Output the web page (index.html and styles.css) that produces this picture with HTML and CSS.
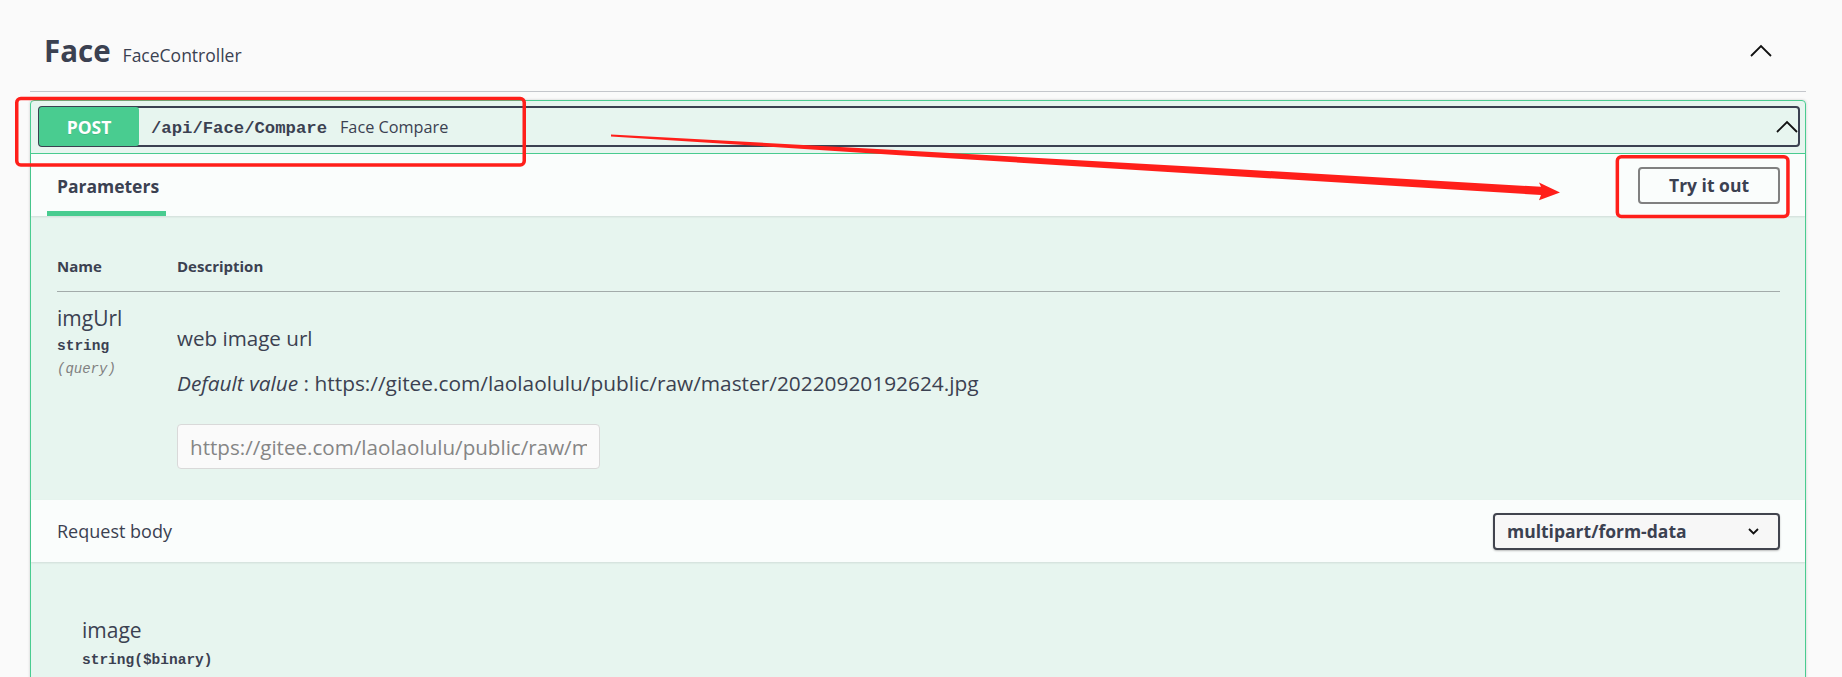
FILE: index.html
```html
<!DOCTYPE html>
<html lang="en">
<head>
<meta charset="utf-8">
<title>Face - Swagger</title>
<link rel="stylesheet" href="styles.css">
</head>
<body>
<div class="page">
  <div class="tag">
    <h3 class="tag-title"><span class="tag-name">Face</span><small class="tag-desc">FaceController</small></h3>
    <svg class="tag-arrow" viewBox="0 0 22 13" width="22" height="13"><polyline points="1,12 11,2 21,12" fill="none" stroke="#111" stroke-width="1.8"/></svg>
  </div>

  <div class="opblock">
    <div class="summary">
      <div class="summary-control">
        <span class="method">POST</span>
        <span class="path">/api/Face/Compare</span>
        <span class="summary-desc">Face Compare</span>
        <svg class="summary-arrow" viewBox="0 0 22 13" width="22" height="13"><polyline points="1,12 11,2 21,12" fill="none" stroke="#111" stroke-width="1.8"/></svg>
      </div>
    </div>

    <div class="section-header">
      <div class="tab"><span>Parameters</span></div>
      <button class="try-out">Try it out</button>
    </div>

    <div class="params">
      <table class="param-table">
        <thead>
          <tr><th class="col-name">Name</th><th>Description</th></tr>
        </thead>
        <tbody>
          <tr>
            <td class="col-name">
              <div class="pname">imgUrl</div>
              <div class="ptype">string</div>
              <div class="pin">(query)</div>
            </td>
            <td>
              <p class="pdesc">web image url</p>
              <p class="pdefault"><i>Default value</i> : https://gitee.com/laolaolulu/public/raw/master/20220920192624.jpg</p>
              <input class="pinput" type="text" placeholder="https://gitee.com/laolaolulu/public/raw/master/20220920192624.jpg">
            </td>
          </tr>
        </tbody>
      </table>
    </div>

    <div class="section-header rb-header">
      <span class="rb-title">Request body</span>
      <div class="select"><span>multipart/form-data</span><svg viewBox="0 0 11 7" width="11" height="7"><polyline points="1,1 5.5,5.5 10,1" fill="none" stroke="#111" stroke-width="1.8"/></svg></div>
    </div>

    <div class="rb-body">
      <div class="prop-name">image</div>
      <div class="prop-type">string($binary)</div>
    </div>
  </div>

  <svg class="annotations" width="1842" height="677" viewBox="0 0 1842 677">
    <rect x="16.75" y="98.45" width="507.5" height="66.5" rx="4" fill="none" stroke="#ff1f1a" stroke-width="3.5"/>
    <rect x="1617.35" y="156.75" width="170.6" height="59.8" rx="4" fill="none" stroke="#ff1f1a" stroke-width="3.5"/>
    <polygon fill="#ff1f1a" points="611,134.6 900,150.2 1200,167 1541,186.8 1539,182.4 1560,192.4 1539,200.2 1541,195 1200,174 900,155.2 611,136.4"/>
  </svg>
</div>
</body>
</html>
```

FILE: styles.css
```css
html, body {
  margin: 0;
  height: 677px;
  overflow: hidden;
}

body {
  background: #fafafa;
  font-family: "Open Sans", "Noto Sans", sans-serif;
  color: #3b4151;
}

.page {
  position: relative;
  padding: 0 36px 0 30px;
}

/* tag header */
.tag {
  display: flex;
  justify-content: space-between;
  align-items: flex-start;
  height: 60px;
  padding: 31px 0 0 14px;
  border-bottom: 1px solid #c4c6cb;
}

.tag-title {
  display: flex;
  align-items: baseline;
  margin: 0;
  font-size: 29.5px;
  line-height: 40px;
  font-weight: 700;
}

.tag-desc {
  margin-left: 12px;
  font-size: 17.5px;
  font-weight: 400;
}

.tag-arrow {
  margin-top: 13px;
  margin-right: 34px;
}

/* operation block */
.opblock {
  margin-top: 8px;
  border: 1px solid #49cc90;
  border-radius: 4px;
  background: rgba(73, 204, 144, 0.1);
  box-shadow: 0 0 3px rgba(0, 0, 0, 0.19);
}

.summary {
  padding: 5px 5px 6px 7px;
  border-bottom: 1px solid #49cc90;
}

.summary-control {
  display: flex;
  align-items: center;
  height: 41px;
  box-sizing: border-box;
  border: 2px solid #3b4151;
  border-radius: 4px;
}

.method {
  flex: none;
  align-self: stretch;
  display: flex;
  align-items: center;
  justify-content: center;
  width: 100px;
  margin: -1px 0 -1px -1px;
  border-radius: 3px;
  background: #49cc90;
  color: #fff;
  font-size: 17.5px;
  font-weight: 700;
  text-shadow: 0 1px 0 rgba(0, 0, 0, 0.1);
}

.path {
  margin: 3px 0 0 12px;
  font-family: "Liberation Mono", monospace;
  font-size: 17.25px;
  font-weight: 700;
  color: #3b4151;
}

.summary-desc {
  margin-left: 13px;
  font-size: 16.25px;
}

.summary-arrow {
  margin-left: auto;
}

/* section headers */
.section-header {
  position: relative;
  display: flex;
  align-items: center;
  justify-content: space-between;
  height: 62px;
  padding: 0 25px 0 16px;
  background: rgba(255, 255, 255, 0.8);
  box-shadow: 0 1px 2px rgba(0, 0, 0, 0.1);
}

.tab {
  align-self: stretch;
  display: flex;
  align-items: center;
  justify-content: center;
  width: 119px;
  padding: 2px 0 0 3px;
  box-sizing: border-box;
  box-shadow: inset 0 -5px 0 #49cc90;
  font-size: 17.5px;
  font-weight: 700;
}

.try-out {
  width: 142px;
  height: 37px;
  padding: 0;
  border: 2px solid #808080;
  border-radius: 4px;
  background: transparent;
  font-family: "Open Sans", sans-serif;
  font-size: 17.5px;
  font-weight: 700;
  color: #3b4151;
}

/* parameters */
.params {
  padding: 25px 25px 0 26px;
}

.param-table {
  width: 100%;
  border-collapse: collapse;
}

.param-table th {
  padding: 15px 0 14px;
  border-bottom: 1px solid #a3abaa;
  text-align: left;
  font-size: 15px;
  line-height: 21px;
  font-weight: 700;
}

.param-table .col-name {
  width: 120px;
}

.param-table td {
  vertical-align: top;
  padding: 13px 0 31px;
}

.pname {
  font-size: 21px;
  line-height: 27px;
}

.ptype {
  margin-top: 5px;
  font-family: "Liberation Mono", monospace;
  font-size: 14.5px;
  line-height: 18px;
  font-weight: 600;
}

.pin {
  margin-top: 5px;
  font-family: "Liberation Mono", monospace;
  font-size: 14px;
  line-height: 18px;
  font-style: italic;
  color: #808080;
}

.pdesc {
  margin: 20px 0 0;
  font-size: 20.6px;
  line-height: 27px;
}

.pdefault {
  margin: 18px 0 0;
  font-size: 20.85px;
  line-height: 27px;
}

.pinput {
  display: block;
  width: 423px;
  height: 45px;
  margin-top: 27px;
  padding: 0 12px;
  box-sizing: border-box;
  border: 1px solid #d9d9d9;
  border-radius: 4px;
  background: #fafafa;
  font-family: "Open Sans", sans-serif;
  font-size: 20.6px;
  color: #3b4151;
}

.pinput::placeholder {
  color: #858585;
}

/* request body */
.rb-header {
  padding: 0 25px 0 26px;
}

.rb-title {
  font-size: 18px;
}

.select {
  display: flex;
  align-items: center;
  justify-content: space-between;
  width: 287px;
  height: 37px;
  padding: 0 19px 0 12px;
  box-sizing: border-box;
  border: 2px solid #41444e;
  border-radius: 4px;
  background: #f7f7f7;
  box-shadow: 0 1px 2px rgba(0, 0, 0, 0.25);
  font-size: 17.5px;
  font-weight: 700;
}

.rb-body {
  padding: 55px 0 120px 51px;
}

.prop-name {
  font-size: 21px;
  line-height: 27px;
}

.prop-type {
  margin-top: 7px;
  font-family: "Liberation Mono", monospace;
  font-size: 14.5px;
  line-height: 18px;
  font-weight: 600;
}

/* screenshot annotations */
.annotations {
  position: absolute;
  top: 0;
  left: 0;
  pointer-events: none;
}
```
